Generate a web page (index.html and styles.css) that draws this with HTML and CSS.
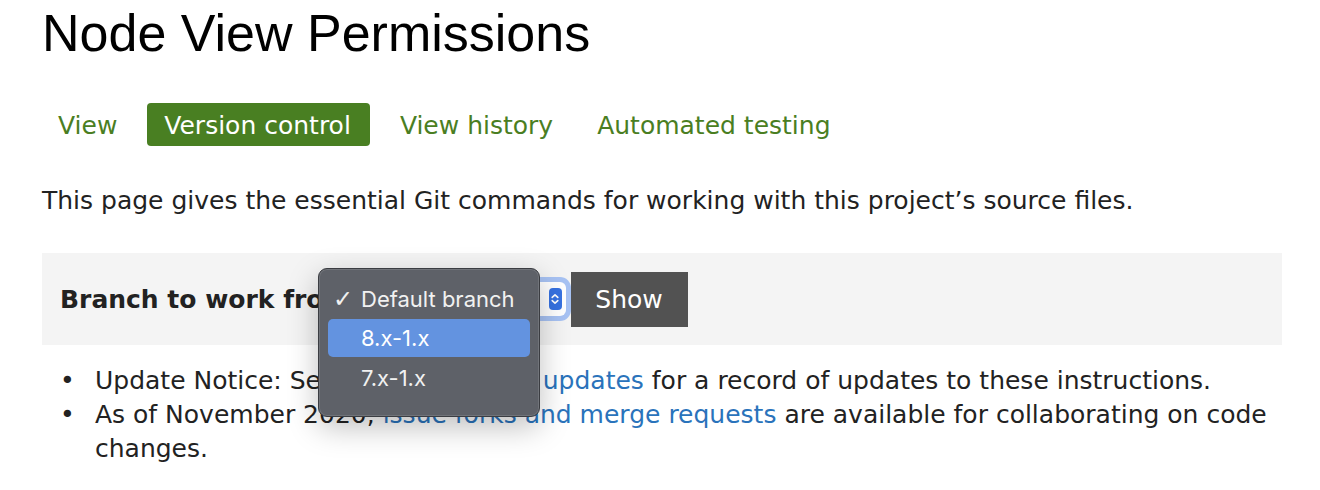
FILE: index.html
```html
<!DOCTYPE html>
<html>
<head>
<meta charset="utf-8">
<link rel="stylesheet" href="styles.css">
</head>
<body>
<div class="page">
  <h1 class="title">Node View Permissions</h1>
  <ul class="tabs">
    <li><a class="tab" href="#">View</a></li>
    <li><a class="tab active" href="#">Version control</a></li>
    <li><a class="tab" href="#">View history</a></li>
    <li><a class="tab" href="#">Automated testing</a></li>
  </ul>
  <p class="intro">This page gives the essential Git commands for working with this project’s source files.</p>
  <div class="branch-panel">
    <span class="branch-label">Branch to work from:</span>
    <div class="fake-select">
      <span class="select-value">Default branch</span>
      <span class="select-arrow">
        <svg width="10" height="16" viewBox="0 0 10 16"><path d="M2.2 6.4 L5 3.8 L7.8 6.4 M2.2 9.6 L5 12.2 L7.8 9.6" fill="none" stroke="#fff" stroke-width="1.6" stroke-linecap="round" stroke-linejoin="round"/></svg>
      </span>
    </div>
    <button class="show-btn">Show</button>
    <div class="menu">
      <div class="menu-item checked"><span class="check">✓</span>Default branch</div>
      <div class="menu-item hover">8.x-1.x</div>
      <div class="menu-item">7.x-1.x</div>
    </div>
  </div>
  <ul class="notes">
    <li>Update Notice: See <a href="#">Git instructions updates</a> for a record of updates to these instructions.</li>
    <li>As of November 2020, <a href="#">issue forks and merge requests</a> are available for collaborating on code changes.</li>
  </ul>
</div>
</body>
</html>
```

FILE: styles.css
```css
html, body {
  margin: 0;
  padding: 0;
  background: #fff;
}
.page {
  padding: 0 38px 0 42px;
  font-family: "DejaVu Sans", Verdana, sans-serif;
  font-size: 25px;
  color: #222;
}
.title {
  font-family: "Liberation Sans", Arial, sans-serif;
  font-weight: 400;
  font-size: 52px;
  line-height: 58px;
  margin: 4px 0 0 0;
  color: #000;
}
.tabs {
  list-style: none;
  display: flex;
  gap: 14px;
  margin: 41px 0 0 0;
  padding: 0;
}
.tab {
  display: block;
  color: #4a7e22;
  text-decoration: none;
  padding: 3px 16px 0 16px;
  height: 40px;
  line-height: 40px;
  border-radius: 4px;
}
.tab.active {
  background: #497f22;
  color: #fff;
  padding: 3px 19px 0 17px;
}
.tabs li:nth-child(3) .tab {
  padding-right: 14px;
}
.intro {
  margin: 38px 0 0 0;
  line-height: 34px;
}
.branch-panel {
  position: relative;
  margin-top: 35px;
  background: #f4f4f4;
  height: 92px;
  display: flex;
  align-items: center;
  padding: 0 18px;
}
.branch-label {
  font-weight: bold;
  color: #222;
  flex: none;
}
.fake-select {
  flex: none;
  display: flex;
  align-items: center;
  justify-content: space-between;
  width: 196px;
  height: 34px;
  margin-left: 10px;
  padding: 0 4px 0 10px;
  box-sizing: border-box;
  background: #fff;
  border-radius: 6px;
  box-shadow: 0 0 0 5px #a7c2f3;
  font-size: 20px;
}
.select-arrow {
  display: flex;
  align-items: center;
  justify-content: center;
  width: 13px;
  height: 22px;
  background: #3772e1;
  border-radius: 4px;
}
.menu {
  position: absolute;
  left: 276px;
  top: 15px;
  width: 222px;
  box-sizing: border-box;
  background: #5e6168;
  border: 1px solid #3b3d42;
  border-radius: 9px;
  padding: 14px 9px 17px 9px;
  box-shadow: 0 10px 30px rgba(0,0,0,0.25), inset 0 0 0 1px rgba(255,255,255,0.12);
  color: #f1f1f1;
  font-family: "Inter", "DejaVu Sans", sans-serif;
  font-size: 22px;
}
.menu-item {
  height: 38px;
  line-height: 38px;
  padding-left: 33px;
  border-radius: 5px;
  position: relative;
  margin-bottom: 2px;
}
.menu-item.checked {
  height: 32px;
  line-height: 32px;
  margin-bottom: 4px;
}
.menu-item.hover {
  background: #6393e0;
  color: #fff;
}
.check {
  position: absolute;
  left: 5px;
  font-family: "DejaVu Sans", sans-serif;
  font-size: 24px;
}
.show-btn {
  flex: none;
  margin-left: 5px;
  background: #525252;
  color: #fff;
  border: 0;
  font-family: "DejaVu Sans", sans-serif;
  font-size: 25px;
  width: 117px;
  height: 55px;
  cursor: pointer;
}
.notes {
  list-style: none;
  margin: 19px 0 0 0;
  padding-left: 53px;
  line-height: 34px;
}
.notes li::before {
  content: "•";
  display: inline-block;
  width: 35px;
  margin-left: -35px;
}
.notes a {
  color: #2a73bb;
  text-decoration: none;
}
```
